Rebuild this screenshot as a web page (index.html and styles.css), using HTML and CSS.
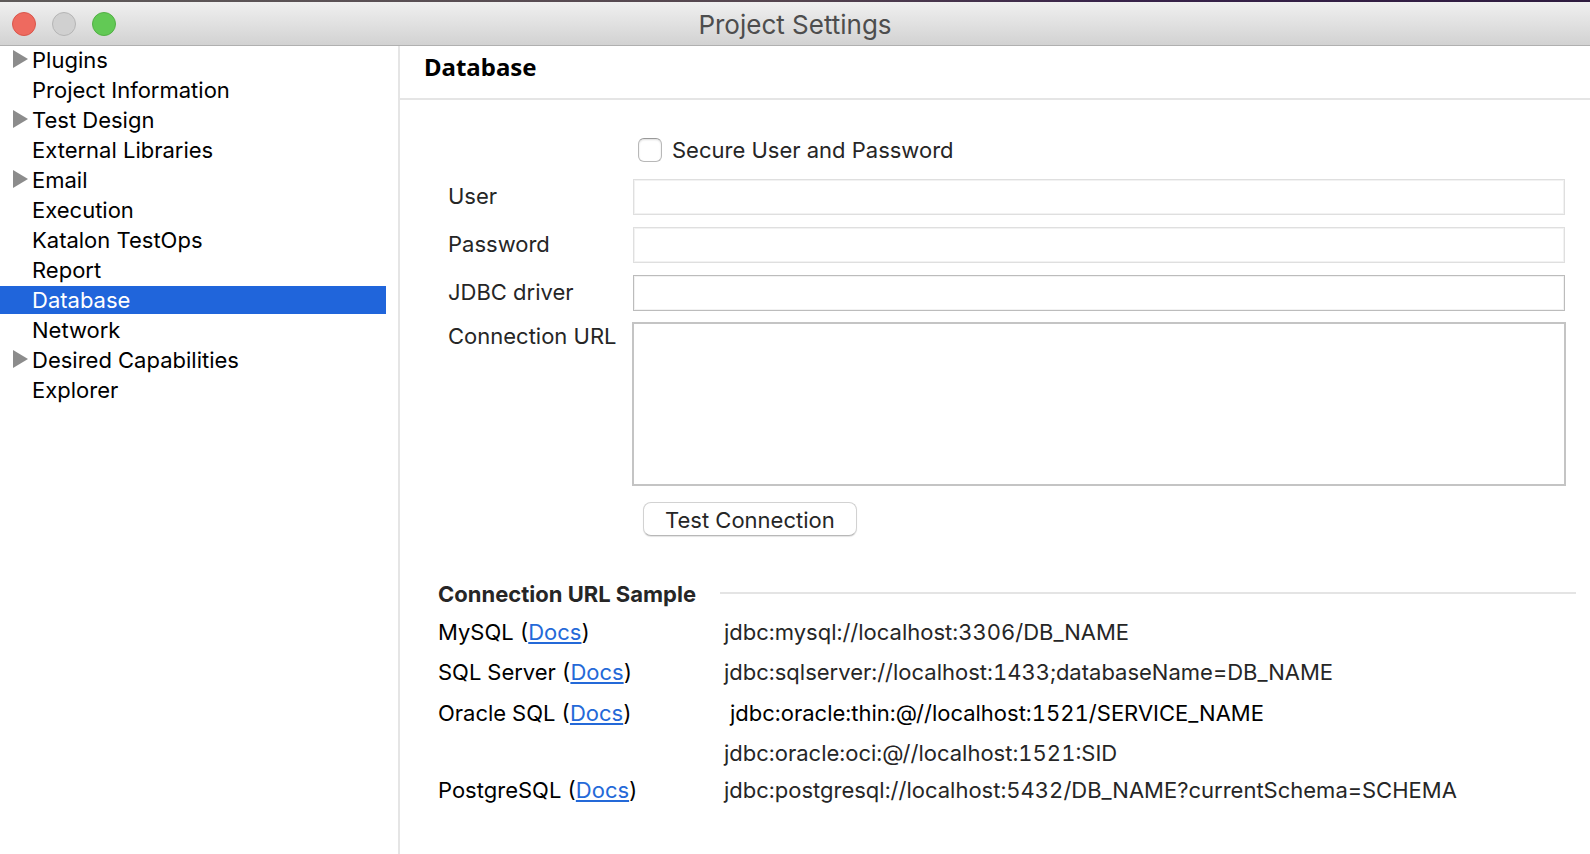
FILE: index.html
```html
<!DOCTYPE html>
<html lang="en">
<head>
<meta charset="utf-8">
<title>Project Settings</title>
<link rel="stylesheet" href="styles.css">
</head>
<body>
<div class="window">
  <header class="titlebar">
    <div class="traffic">
      <button class="light light-close" type="button" aria-label="Close"></button>
      <button class="light light-minimize" type="button" aria-label="Minimize" disabled></button>
      <button class="light light-zoom" type="button" aria-label="Zoom"></button>
    </div>
    <h1 class="window-title">Project Settings</h1>
    <div class="titlebar-end"></div>
  </header>
  <div class="body">
    <nav class="sidebar" aria-label="Settings">
      <ul class="tree">
        <li><button class="item parent" type="button">Plugins</button></li>
        <li><button class="item" type="button">Project Information</button></li>
        <li><button class="item parent" type="button">Test Design</button></li>
        <li><button class="item" type="button">External Libraries</button></li>
        <li><button class="item parent" type="button">Email</button></li>
        <li><button class="item" type="button">Execution</button></li>
        <li><button class="item" type="button">Katalon TestOps</button></li>
        <li><button class="item" type="button">Report</button></li>
        <li><button class="item selected" type="button" aria-current="page">Database</button></li>
        <li><button class="item" type="button">Network</button></li>
        <li><button class="item parent" type="button">Desired Capabilities</button></li>
        <li><button class="item" type="button">Explorer</button></li>
      </ul>
    </nav>
    <main class="main">
      <div class="page-head"><h2 class="page-title">Database</h2></div>
      <form class="form">
        <div class="check-row">
          <input class="check" type="checkbox" id="secure">
          <label for="secure">Secure User and Password</label>
        </div>
        <label class="label" for="user">User</label>
        <input class="field" type="text" id="user" disabled>
        <label class="label" for="password">Password</label>
        <input class="field" type="password" id="password" disabled>
        <label class="label" for="driver">JDBC driver</label>
        <input class="field" type="text" id="driver">
        <label class="label label-top" for="url">Connection URL</label>
        <textarea class="area" id="url"></textarea>
        <button class="test" type="button">Test Connection</button>
      </form>
      <section class="samples">
        <div class="samples-head"><h3 class="samples-title">Connection URL Sample</h3></div>
        <table class="table">
          <tbody>
            <tr><th scope="row">MySQL (<a href="#mysql">Docs</a>)</th><td>jdbc:mysql://localhost:3306/DB_NAME</td></tr>
            <tr><th scope="row">SQL Server (<a href="#sqlserver">Docs</a>)</th><td>jdbc:sqlserver://localhost:1433;databaseName=DB_NAME</td></tr>
            <tr class="loose"><th scope="row">Oracle SQL (<a href="#oracle">Docs</a>)</th><td class="active">jdbc:oracle:thin:@//localhost:1521/SERVICE_NAME</td></tr>
            <tr class="tight"><th></th><td>jdbc:oracle:oci:@//localhost:1521:SID</td></tr>
            <tr class="tight"><th scope="row">PostgreSQL (<a href="#postgresql">Docs</a>)</th><td>jdbc:postgresql://localhost:5432/DB_NAME?currentSchema=SCHEMA</td></tr>
          </tbody>
        </table>
      </section>
    </main>
  </div>
</div>
</body>
</html>
```

FILE: styles.css
```css
* { box-sizing: border-box; }

body {
  margin: 0;
  background: #fff;
  color: #262626;
  font-family: Inter, "Liberation Sans", sans-serif;
  font-size: 22px;
  line-height: 28px;
}

button, input, textarea { font: inherit; color: inherit; }
h1, h2, h3 { margin: 0; }

.window {
  display: flex;
  flex-direction: column;
  min-height: 100vh;
}

.window::before {
  content: "";
  height: 2px;
  background: linear-gradient(90deg, #5f5b5a, #55454f 50%, #38234a 70%, #2f1c40);
}

.titlebar {
  display: grid;
  grid-template-columns: 1fr auto 1fr;
  align-items: center;
  height: 44px;
  padding: 0 12px;
  background: linear-gradient(#f0f0f0, #d2d2d2);
  border-bottom: 1px solid #b0b0b0;
}

.traffic { display: flex; gap: 16px; }

.light {
  width: 24px;
  height: 24px;
  padding: 0;
  border: 1px solid;
  border-radius: 50%;
}
.light-close { background: #ee6a5f; border-color: #d9564b; }
.light-minimize { background: #d0d0d0; border-color: #b5b5b5; }
.light-zoom { background: #62c955; border-color: #52b045; }

.window-title {
  padding-top: 2px;
  color: #4d4d4d;
  font-size: 26px;
  font-weight: 400;
}

.body { display: flex; flex: 1; }

.sidebar {
  flex: none;
  width: 400px;
  padding-right: 12px;
  border-right: 2px solid #e5e5e5;
}

.tree {
  display: flex;
  flex-direction: column;
  gap: 2px;
  margin: 0;
  padding: 0;
  list-style: none;
}

.item {
  display: flex;
  align-items: center;
  width: 100%;
  height: 28px;
  padding: 0 0 0 32px;
  border: 0;
  background: none;
  color: #000;
  text-align: left;
}
.parent { padding-left: 13px; }
.parent::before {
  content: "";
  width: 15px;
  height: 18px;
  margin: 0 4px 2px 0;
  background: #8c8c8c;
  clip-path: polygon(0 0, 100% 50%, 0 100%);
}
.selected { background: #2065db; color: #fff; }

.main { flex: 1; min-width: 0; }

.page-head {
  padding: 7px 24px 17px;
  border-bottom: 2px solid #e5e5e5;
}
.page-title {
  color: #000;
  font-family: "Noto Sans", "Open Sans", sans-serif;
  font-size: 24px;
  font-weight: 700;
}

.form {
  display: grid;
  grid-template-columns: 184px 1fr;
  row-gap: 10px;
  padding: 32px 24px 0 48px;
}

.check-row {
  grid-column: 2;
  display: flex;
  align-items: center;
  gap: 10px;
  height: 36px;
  padding-left: 6px;
}
.check {
  appearance: none;
  width: 24px;
  height: 24px;
  margin: 0;
  border: 1px solid #b8b8b8;
  border-top-color: #999;
  border-radius: 6px;
  background: #fff;
  box-shadow: inset 0 1px 2px #ddd;
}

.label { padding-top: 4px; white-space: nowrap; }
.label-top { padding-top: 0; }

.field {
  min-width: 0;
  height: 36px;
  margin: 1px;
  padding: 0 6px;
  border: 1px solid #bcbcbc;
  border-radius: 0;
  background: #fff;
  box-shadow: inset 0 0 0 1px #f2f2f2;
}
.field:disabled { border-color: #dfdfdf; }

.area {
  height: 164px;
  padding: 4px 6px;
  border: 2px solid #c4c4c4;
  border-radius: 0;
  resize: none;
}

.test {
  grid-column: 2;
  justify-self: start;
  height: 34px;
  margin: 6px 0 0 11px;
  padding: 2px 21px 0;
  border: 1px solid #d2d2d2;
  border-bottom-color: #b8b8b8;
  border-radius: 8px;
  background: #fff;
  box-shadow: 0 1px 1px #e4e4e4;
}

.samples { padding: 44px 14px 40px 38px; }

.samples-head {
  display: flex;
  align-items: center;
  gap: 24px;
}
.samples-head::after {
  content: "";
  flex: 1;
  height: 2px;
  margin-bottom: 2px;
  background: #e4e4e4;
}
.samples-title { font-size: 22px; font-weight: 700; }

.table {
  width: 100%;
  margin-top: 4px;
  border-collapse: collapse;
  table-layout: fixed;
  font-variant-numeric: tabular-nums;
}
.table tr { height: 40px; }
.table .loose { height: 42px; }
.table .tight { height: 37px; }
.table th, .table td { padding: 0; text-align: left; white-space: nowrap; }
.table th { width: 286px; color: #000; font-weight: 400; }
.table .active { padding-left: 6px; color: #000; }
.table a {
  color: #2469d8;
  text-decoration-thickness: 2px;
  text-underline-offset: 2px;
}
```
